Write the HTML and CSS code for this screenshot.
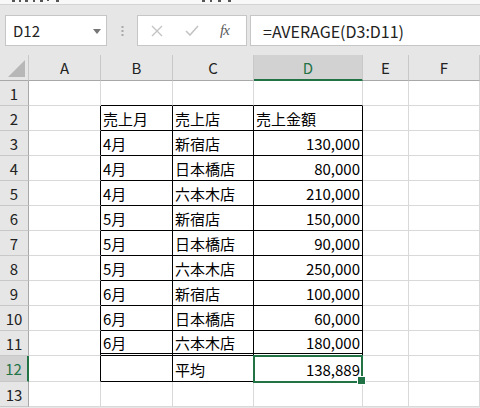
FILE: index.html
```html
<!DOCTYPE html>
<html lang="ja">
<head>
<meta charset="utf-8">
<title>Excel</title>
<link rel="stylesheet" href="styles.css">
</head>
<body>
<div class="strip"><svg width="480" height="4" viewBox="0 0 480 4"><g fill="#555"><rect x="12" y="0" width="3" height="2"/><rect x="19" y="0" width="2" height="2"/><rect x="25" y="0" width="3" height="2"/><rect x="33" y="0" width="2" height="2"/><rect x="40" y="0" width="3" height="2"/><rect x="47" y="0" width="2" height="1"/><rect x="56" y="0" width="3" height="2"/><rect x="202" y="0" width="3" height="2"/><rect x="210" y="0" width="2" height="2"/><rect x="218" y="0" width="3" height="2"/><rect x="228" y="0" width="3" height="2"/></g></svg></div>
<div class="fbar">
  <div class="namebox"><span>D12</span><svg class="dd" width="8" height="5" viewBox="0 0 8 5"><path d="M0 0H8L4 5Z" fill="#767676"/></svg></div>
  <div class="dots"><svg width="3" height="10" viewBox="0 0 3 10"><rect x="0.5" y="0" width="2" height="2" fill="#a8a8a8"/><rect x="0.5" y="4" width="2" height="2" fill="#a8a8a8"/><rect x="0.5" y="8" width="2" height="2" fill="#a8a8a8"/></svg></div>
  <div class="fxbox">
    <svg class="ix" width="12" height="12" viewBox="0 0 12 12"><path d="M1 1L11 11M11 1L1 11" stroke="#c4c4c4" stroke-width="1.4" fill="none"/></svg>
    <svg class="iv" width="14" height="11" viewBox="0 0 14 11"><path d="M1 6L5 10L13 1" stroke="#c4c4c4" stroke-width="1.6" fill="none"/></svg>
    <span class="fx">fx</span>
  </div>
  <div class="formula">=AVERAGE(D3:D11)</div>
</div>
<div class="sheet">
  <div class="corner"><svg width="28" height="25" viewBox="0 0 28 25"><path d="M25 5V22H8Z" fill="#b7b7b7"/></svg></div>
  <div class="ch">A</div><div class="ch">B</div><div class="ch">C</div><div class="ch selc">D</div><div class="ch">E</div><div class="ch">F</div>

  <div class="rh">1</div><div class="c"></div><div class="c tt"></div><div class="c tt"></div><div class="c tt"></div><div class="c"></div><div class="c"></div>

  <div class="rh">2</div><div class="c tl"></div><div class="c t">売上月</div><div class="c t">売上店</div><div class="c t">売上金額</div><div class="c"></div><div class="c"></div>
  <div class="rh">3</div><div class="c tl"></div><div class="c t">4月</div><div class="c t">新宿店</div><div class="c t r">130,000</div><div class="c"></div><div class="c"></div>
  <div class="rh">4</div><div class="c tl"></div><div class="c t">4月</div><div class="c t">日本橋店</div><div class="c t r">80,000</div><div class="c"></div><div class="c"></div>
  <div class="rh">5</div><div class="c tl"></div><div class="c t">4月</div><div class="c t">六本木店</div><div class="c t r">210,000</div><div class="c"></div><div class="c"></div>
  <div class="rh">6</div><div class="c tl"></div><div class="c t">5月</div><div class="c t">新宿店</div><div class="c t r">150,000</div><div class="c"></div><div class="c"></div>
  <div class="rh">7</div><div class="c tl"></div><div class="c t">5月</div><div class="c t">日本橋店</div><div class="c t r">90,000</div><div class="c"></div><div class="c"></div>
  <div class="rh">8</div><div class="c tl"></div><div class="c t">5月</div><div class="c t">六本木店</div><div class="c t r">250,000</div><div class="c"></div><div class="c"></div>
  <div class="rh">9</div><div class="c tl"></div><div class="c t">6月</div><div class="c t">新宿店</div><div class="c t r">100,000</div><div class="c"></div><div class="c"></div>
  <div class="rh">10</div><div class="c tl"></div><div class="c t">6月</div><div class="c t">日本橋店</div><div class="c t r">60,000</div><div class="c"></div><div class="c"></div>
  <div class="rh">11</div><div class="c tl"></div><div class="c t dbl">6月</div><div class="c t dbl">六本木店</div><div class="c t dbl r">180,000</div><div class="c"></div><div class="c"></div>
  <div class="rh selr">12</div><div class="c tl"></div><div class="c t"></div><div class="c t">平均</div><div class="c t r sel">138,889</div><div class="c"></div><div class="c"></div>
  <div class="rh">13</div><div class="c"></div><div class="c"></div><div class="c"></div><div class="c"></div><div class="c"></div><div class="c"></div>
</div>
</body>
</html>
```
FILE: styles.css
```css
* { box-sizing: border-box; }
html, body { margin: 0; padding: 0; }
body {
  width: 480px;
  height: 408px;
  overflow: hidden;
  background: #e6e6e6;
  font-family: "Noto Sans CJK JP", "Noto Sans", sans-serif;
  color: #000;
}
.strip {
  height: 5px;
  background: #f8f8f8;
  border-bottom: 1px solid #d4d4d4;
  overflow: hidden;
  display: flex;
}
.fbar {
  display: flex;
  align-items: flex-start;
  height: 50px;
  padding: 10px 0 0 5px;
}
.namebox {
  width: 102px;
  height: 31px;
  background: #fff;
  border: 1px solid #c6c6c6;
  display: flex;
  align-items: center;
  justify-content: space-between;
  padding: 0 5px 0 7px;
  font-size: 15px;
  color: #222;
}
.dd { margin-top: 1px; }
.dots {
  width: 30px;
  height: 31px;
  display: flex;
  align-items: center;
  justify-content: center;
}
.fxbox {
  width: 110px;
  height: 31px;
  background: #fff;
  border: 1px solid #c6c6c6;
  display: flex;
  align-items: center;
}
.ix { margin-left: 13px; }
.iv { margin-left: 22px; }
.fx {
  margin-left: 21px;
  font-family: "Liberation Serif", serif;
  font-style: italic;
  font-size: 15px;
  color: #5a5a5a;
  letter-spacing: -1px;
}
.formula {
  margin-left: 3px;
  flex: 1;
  height: 31px;
  background: #fff;
  border: 1px solid #c6c6c6;
  border-right: none;
  padding-left: 12px;
  display: flex;
  align-items: center;
  font-size: 16px;
  color: #222;
}
.sheet {
  display: grid;
  grid-template-columns: 29px 72px 72px 81px 109px 46px 1fr;
  grid-template-rows: 26px repeat(11, 25px) 26px 25px;
  background: #fff;
}
.corner {
  background: #e6e6e6;
  border-right: 1px solid #c8c8c8;
  border-bottom: 1px solid #a8a8a8;
  display: flex;
}
.ch {
  background: #e6e6e6;
  border-right: 1px solid #c8c8c8;
  border-bottom: 1px solid #a8a8a8;
  display: flex;
  align-items: center;
  justify-content: center;
  font-size: 15px;
  color: #222;
}
.ch.selc {
  background: #d2d2d2;
  border-bottom: 2px solid #217346;
  color: #217346;
}
.rh {
  background: #e6e6e6;
  border-right: 1px solid #a8a8a8;
  border-bottom: 1px solid #c8c8c8;
  display: flex;
  align-items: center;
  justify-content: center;
  font-size: 15px;
  color: #222;
}
.rh.selr {
  background: #d2d2d2;
  border-right: 2px solid #217346;
  color: #217346;
}
.c {
  border-right: 1px solid #d9d9d9;
  border-bottom: 1px solid #d9d9d9;
  display: flex;
  align-items: center;
  padding: 1px 2px 0 2px;
  font-size: 15px;
  line-height: 1;
  white-space: nowrap;
}
.r { justify-content: flex-end; }
.t { border-right-color: #000; border-bottom-color: #000; }
.tl { border-right-color: #000; }
.tt { border-bottom-color: #000; }
.dbl { border-bottom: 3px double #000; }
.sel { position: relative; }
.sel::before {
  content: "";
  position: absolute;
  left: -1px;
  top: -1px;
  right: -1px;
  bottom: -2px;
  border: 2px solid #217346;
  z-index: 1;
}
.sel::after {
  content: "";
  position: absolute;
  right: -4px;
  bottom: -4px;
  width: 7px;
  height: 7px;
  background: #217346;
  border: 1px solid #fff;
  z-index: 2;
}
```
